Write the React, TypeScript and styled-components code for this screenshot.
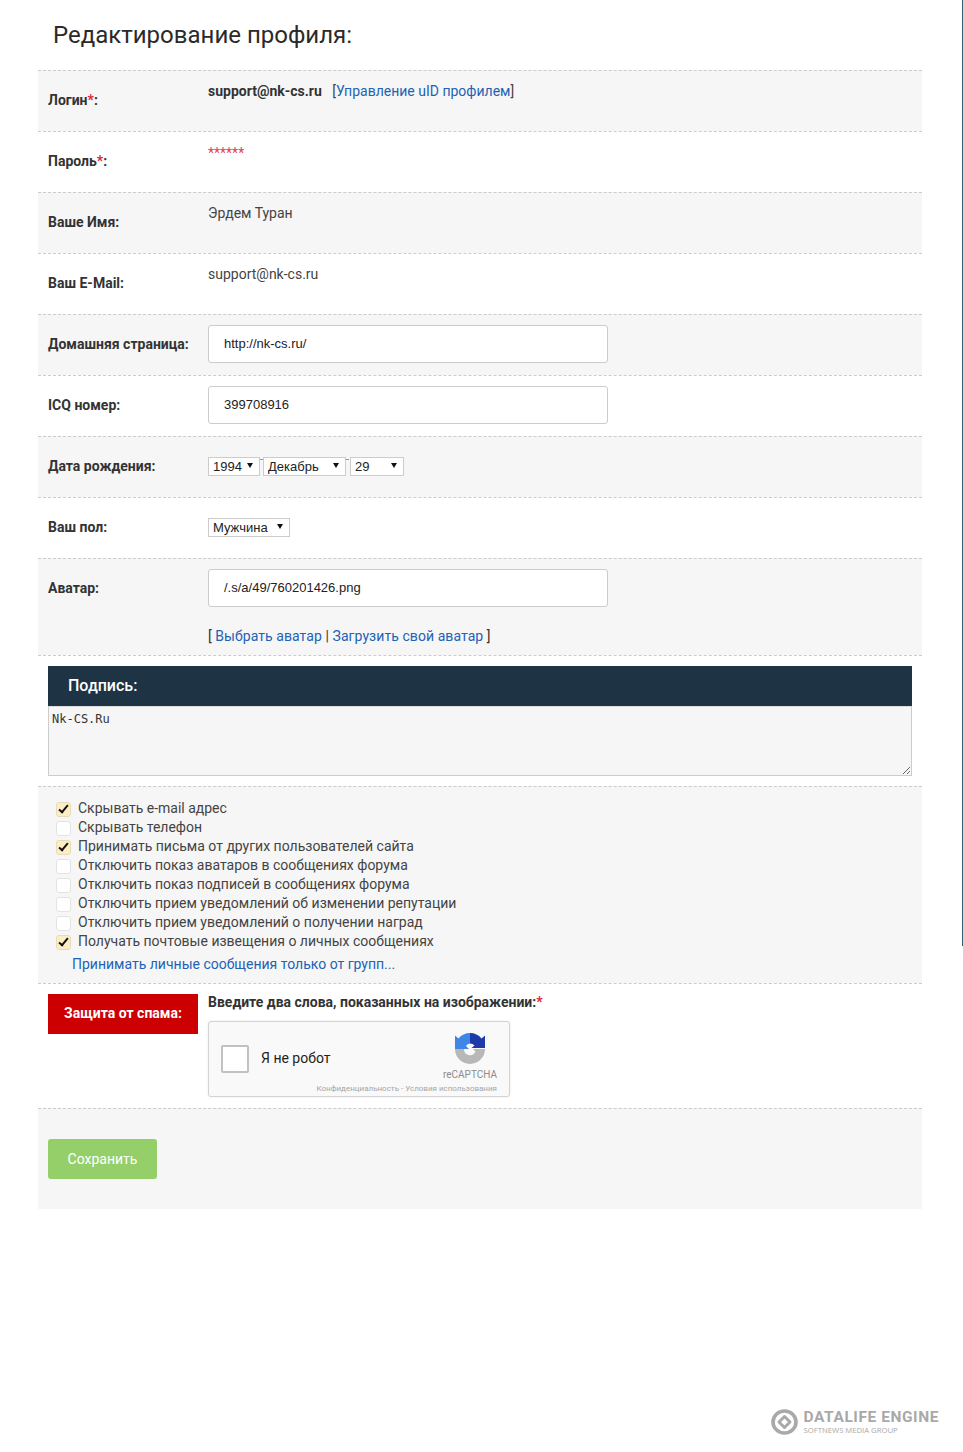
import React from "react";
import styled, { createGlobalStyle } from "styled-components";

const Global = createGlobalStyle`
  html, body { margin: 0; padding: 0; background: #fff; }
  body { font-family: Roboto, "Liberation Sans", sans-serif; font-size: 14px; color: #333; }
`;

const Page = styled.div`
  display: flex;
  width: 963px;
  min-height: 1452px;
`;
const Main = styled.main`
  width: 962px;
  padding: 0 40px 0 38px;
  box-sizing: border-box;
`;
const Rail = styled.div`
  width: 1px;
  height: 946px;
  background: #2f5f6b;
`;
const Title = styled.h1`
  margin: 0;
  height: 70px;
  padding: 20px 0 0 15px;
  box-sizing: border-box;
  font-size: 24px;
  line-height: 30px;
  font-weight: 400;
  color: #2a2a2a;
`;
const Row = styled.div<{ $shade?: boolean; $height?: number }>`
  display: grid;
  grid-template-columns: 150px 1fr;
  column-gap: 10px;
  align-content: start;
  height: ${(p) => p.$height ?? 61}px;
  box-sizing: border-box;
  padding: 10px 10px 0;
  border-top: 1px dashed #ccc;
  background: ${(p) => (p.$shade ? "#f6f6f6" : "#fff")};
`;
const Label = styled.div`
  font-weight: 700;
  line-height: 38px;
  color: #333;
`;
const Star = styled.span`
  color: #e0263a;
`;
const Value = styled.div`
  line-height: 20px;
  color: #444;
`;
const Strong = styled.b`
  color: #333;
  margin-right: 7px;
`;
const Link = styled.a`
  color: #2262b5;
  text-decoration: none;
`;
const Stars = styled.span`
  display: block;
  padding-top: 1px;
  color: #e2405a;
  font-size: 14px;
`;
const TextInput = styled.input`
  display: block;
  width: 400px;
  height: 38px;
  box-sizing: border-box;
  padding: 0 15px 1px;
  border: 1px solid #ccc;
  border-radius: 3px;
  background: #fff;
  font-family: "Liberation Sans", Arial, sans-serif;
  font-size: 13px;
  color: #222;
`;
const AvatarLinks = styled.div`
  margin-top: 19px;
  line-height: 20px;
  color: #333;
  letter-spacing: 0.07px;
`;
const SelectRow = styled.div`
  display: flex;
  align-items: flex-start;
  height: 38px;
  padding-top: 10px;
  box-sizing: border-box;
`;
const Tick = styled.i<{ $width: number }>`
  display: block;
  width: ${(p) => p.$width}px;
  height: 1px;
  margin-top: 2px;
  background: linear-gradient(to right, #999 3px, transparent 3px);
`;
const SelectWrap = styled.span<{ $width: number }>`
  position: relative;
  display: block;
  width: ${(p) => p.$width}px;
  height: 19px;
  &::after {
    content: "";
    position: absolute;
    right: 7px;
    top: 6px;
    border-left: 3px solid transparent;
    border-right: 3px solid transparent;
    border-top: 5px solid #111;
    pointer-events: none;
  }
`;
const Select = styled.select`
  appearance: none;
  display: block;
  width: 100%;
  height: 19px;
  box-sizing: border-box;
  padding: 0 0 1px 4px;
  border: 1px solid #ccc;
  border-radius: 0;
  background: #fff;
  font-family: "Liberation Sans", Arial, sans-serif;
  font-size: 13px;
  color: #222;
`;
const SignatureBlock = styled.div`
  height: 131px;
  box-sizing: border-box;
  padding: 10px 10px 0;
  border-top: 1px dashed #ccc;
`;
const SignatureHead = styled.div`
  height: 40px;
  padding-left: 20px;
  background: #1e3344;
  color: #fff;
  font-size: 16px;
  font-weight: 500;
  line-height: 40px;
`;
const Signature = styled.textarea`
  display: block;
  width: 100%;
  height: 70px;
  box-sizing: border-box;
  margin: 0;
  padding: 5px 3px;
  border: 1px solid #ccc;
  border-top-color: #ddd;
  border-radius: 0;
  background: #f6f6f6;
  font-family: "DejaVu Sans Mono", monospace;
  font-size: 12px;
  line-height: 14px;
  color: #333;
`;
const Options = styled.div`
  height: 197px;
  box-sizing: border-box;
  padding: 12px 18px 0;
  border-top: 1px dashed #ccc;
  background: #f6f6f6;
`;
const OptionLine = styled.label`
  display: flex;
  align-items: center;
  height: 19px;
  line-height: 19px;
  color: #444;
`;
const Check = styled.input`
  appearance: none;
  position: relative;
  flex: none;
  width: 15px;
  height: 15px;
  margin: 1px 7px 0 0;
  box-sizing: border-box;
  border: 1px solid #e3e3e3;
  border-radius: 3px;
  background: #fff;
  &:checked {
    background: #fcedc4;
    border-color: #e8dcb8;
  }
  &:checked::after {
    content: "";
    position: absolute;
    left: 4px;
    top: 0;
    width: 3px;
    height: 8px;
    border-right: 2px solid #111;
    border-bottom: 2px solid #111;
    transform: rotate(40deg);
  }
`;
const GroupsLink = styled(Link)`
  display: block;
  margin: 3px 0 0 16px;
  line-height: 20px;
`;
const SpamRow = styled.div`
  display: flex;
  gap: 10px;
  height: 125px;
  box-sizing: border-box;
  padding: 10px 10px 0;
  border-top: 1px dashed #ccc;
`;
const SpamBadge = styled.div`
  width: 150px;
  height: 40px;
  background: #cc0000;
  color: #fff;
  font-weight: 700;
  text-align: center;
  line-height: 38px;
`;
const SpamPrompt = styled.div`
  font-weight: 700;
  line-height: 16px;
  color: #333;
`;
const Captcha = styled.div`
  position: relative;
  display: flex;
  align-items: center;
  width: 302px;
  height: 76px;
  margin-top: 11px;
  box-sizing: border-box;
  border: 1px solid #d3d3d3;
  border-radius: 3px;
  background: #f9f9f9;
  box-shadow: 0 0 3px rgba(0, 0, 0, 0.08);
  font-family: Roboto, sans-serif;
`;
const CaptchaBox = styled.span`
  width: 28px;
  height: 28px;
  margin-left: 12px;
  box-sizing: border-box;
  border: 2px solid #c1c1c1;
  border-radius: 2px;
  background: #fff;
`;
const CaptchaText = styled.span`
  margin: -2px 0 0 12px;
  font-size: 14px;
  color: #222;
`;
const CaptchaBrand = styled.div`
  position: absolute;
  right: 12px;
  top: 11px;
  display: flex;
  flex-direction: column;
  align-items: flex-end;
`;
const CaptchaMark = styled.svg`
  margin-right: 12px;
`;
const BrandName = styled.span`
  margin-top: 5px;
  font-size: 10px;
  line-height: 12px;
  color: #8c8c8c;
`;
const BrandTerms = styled.span`
  margin-top: 3px;
  font-size: 8px;
  line-height: 10px;
  white-space: nowrap;
  color: #a6a6a6;
`;
const SaveRow = styled.div`
  height: 101px;
  box-sizing: border-box;
  padding: 30px 10px 0;
  border-top: 1px dashed #ccc;
  background: #f6f6f6;
`;
const SaveButton = styled.button`
  width: 109px;
  height: 40px;
  padding: 0;
  border: 0;
  border-radius: 3px;
  background: #95cf6a;
  color: #fff;
  font-family: Roboto, sans-serif;
  font-size: 14px;
`;
const Footer = styled.div`
  display: flex;
  justify-content: flex-end;
  align-items: center;
  gap: 6px;
  margin: 199px -17px 0 0;
  color: #a9a9a9;
`;
const FooterText = styled.div`
  display: flex;
  flex-direction: column;
`;
const Brand = styled.span`
  padding-top: 1px;
  font-family: Roboto, sans-serif;
  font-weight: 700;
  font-size: 15.5px;
  line-height: 16px;
  letter-spacing: 0.56px;
  white-space: nowrap;
`;
const Sub = styled.span`
  font-family: "Open Sans", sans-serif;
  font-size: 7.7px;
  line-height: 10px;
  white-space: nowrap;
`;

const CaptchaLogo = () => (
  <CaptchaMark width="30" height="31" viewBox="0 0 30 31">
    <path d="M0 16 H9 A6 6 0 0 0 20.5 18.5 L18 16 H30 A15 15 0 0 1 0 16 Z" fill="#b8b8b8" />
    <path d="M15 0 A15 15 0 0 0 3.5 5.5 L0 2.5 V16 H14 L11 13 A5 5 0 0 1 15 10.5 Z" fill="#3f87e6" />
    <path d="M15 0 A15 15 0 0 1 26.5 5.5 L30 2.5 V15 H16.5 L19.5 12.5 A6 6 0 0 0 15 10.5 Z" fill="#1c3aa9" />
  </CaptchaMark>
);

const FooterLogo = () => (
  <svg width="27" height="26" viewBox="0 0 27 26" fill="none" stroke="#a9a9a9">
    <ellipse cx="13.5" cy="13" rx="11.5" ry="11" strokeWidth="3.6" />
    <path d="M8 13 L13.5 7.5 L19 13 L13.5 18.5 Z" strokeWidth="3" strokeLinejoin="round" />
  </svg>
);

const options: [string, boolean][] = [
  ["Скрывать e-mail адрес", true],
  ["Скрывать телефон", false],
  ["Принимать письма от других пользователей сайта", true],
  ["Отключить показ аватаров в сообщениях форума", false],
  ["Отключить показ подписей в сообщениях форума", false],
  ["Отключить прием уведомлений об изменении репутации", false],
  ["Отключить прием уведомлений о получении наград", false],
  ["Получать почтовые извещения о личных сообщениях", true],
];

export default function App() {
  return (
    <Page>
      <Global />
      <Main>
        <Title>Редактирование профиля:</Title>
        <Row $shade>
          <Label>Логин<Star>*</Star>:</Label>
          <Value>
            <Strong>support@nk-cs.ru</Strong> [<Link href="#">Управление uID профилем</Link>]
          </Value>
        </Row>
        <Row>
          <Label>Пароль<Star>*</Star>:</Label>
          <Value><Stars>******</Stars></Value>
        </Row>
        <Row $shade>
          <Label>Ваше Имя:</Label>
          <Value>Эрдем Туран</Value>
        </Row>
        <Row>
          <Label>Ваш E-Mail:</Label>
          <Value>support@nk-cs.ru</Value>
        </Row>
        <Row $shade>
          <Label>Домашняя страница:</Label>
          <TextInput defaultValue="http://nk-cs.ru/" />
        </Row>
        <Row>
          <Label>ICQ номер:</Label>
          <TextInput defaultValue="399708916" />
        </Row>
        <Row $shade>
          <Label>Дата рождения:</Label>
          <SelectRow>
            <SelectWrap $width={52}>
              <Select defaultValue="1994"><option>1994</option></Select>
            </SelectWrap>
            <Tick $width={3} />
            <SelectWrap $width={83}>
              <Select defaultValue="Декабрь"><option>Декабрь</option></Select>
            </SelectWrap>
            <Tick $width={4} />
            <SelectWrap $width={54}>
              <Select defaultValue="29"><option>29</option></Select>
            </SelectWrap>
          </SelectRow>
        </Row>
        <Row>
          <Label>Ваш пол:</Label>
          <SelectRow>
            <SelectWrap $width={82}>
              <Select defaultValue="Мужчина"><option>Мужчина</option></Select>
            </SelectWrap>
          </SelectRow>
        </Row>
        <Row $shade $height={97}>
          <Label>Аватар:</Label>
          <div>
            <TextInput defaultValue="/.s/a/49/760201426.png" />
            <AvatarLinks>
              [ <Link href="#">Выбрать аватар</Link> | <Link href="#">Загрузить свой аватар</Link> ]
            </AvatarLinks>
          </div>
        </Row>
        <SignatureBlock>
          <SignatureHead>Подпись:</SignatureHead>
          <Signature defaultValue="Nk-CS.Ru" />
        </SignatureBlock>
        <Options>
          {options.map(([text, on]) => (
            <OptionLine key={text}>
              <Check type="checkbox" defaultChecked={on} />
              {text}
            </OptionLine>
          ))}
          <GroupsLink href="#">Принимать личные сообщения только от групп...</GroupsLink>
        </Options>
        <SpamRow>
          <SpamBadge>Защита от спама:</SpamBadge>
          <div>
            <SpamPrompt>Введите два слова, показанных на изображении:<Star>*</Star></SpamPrompt>
            <Captcha>
              <CaptchaBox />
              <CaptchaText>Я не робот</CaptchaText>
              <CaptchaBrand>
                <CaptchaLogo />
                <BrandName>reCAPTCHA</BrandName>
                <BrandTerms>Конфиденциальность - Условия использования</BrandTerms>
              </CaptchaBrand>
            </Captcha>
          </div>
        </SpamRow>
        <SaveRow>
          <SaveButton>Сохранить</SaveButton>
        </SaveRow>
        <Footer>
          <FooterLogo />
          <FooterText>
            <Brand>DATALIFE ENGINE</Brand>
            <Sub>SOFTNEWS MEDIA GROUP</Sub>
          </FooterText>
        </Footer>
      </Main>
      <Rail />
    </Page>
  );
}
